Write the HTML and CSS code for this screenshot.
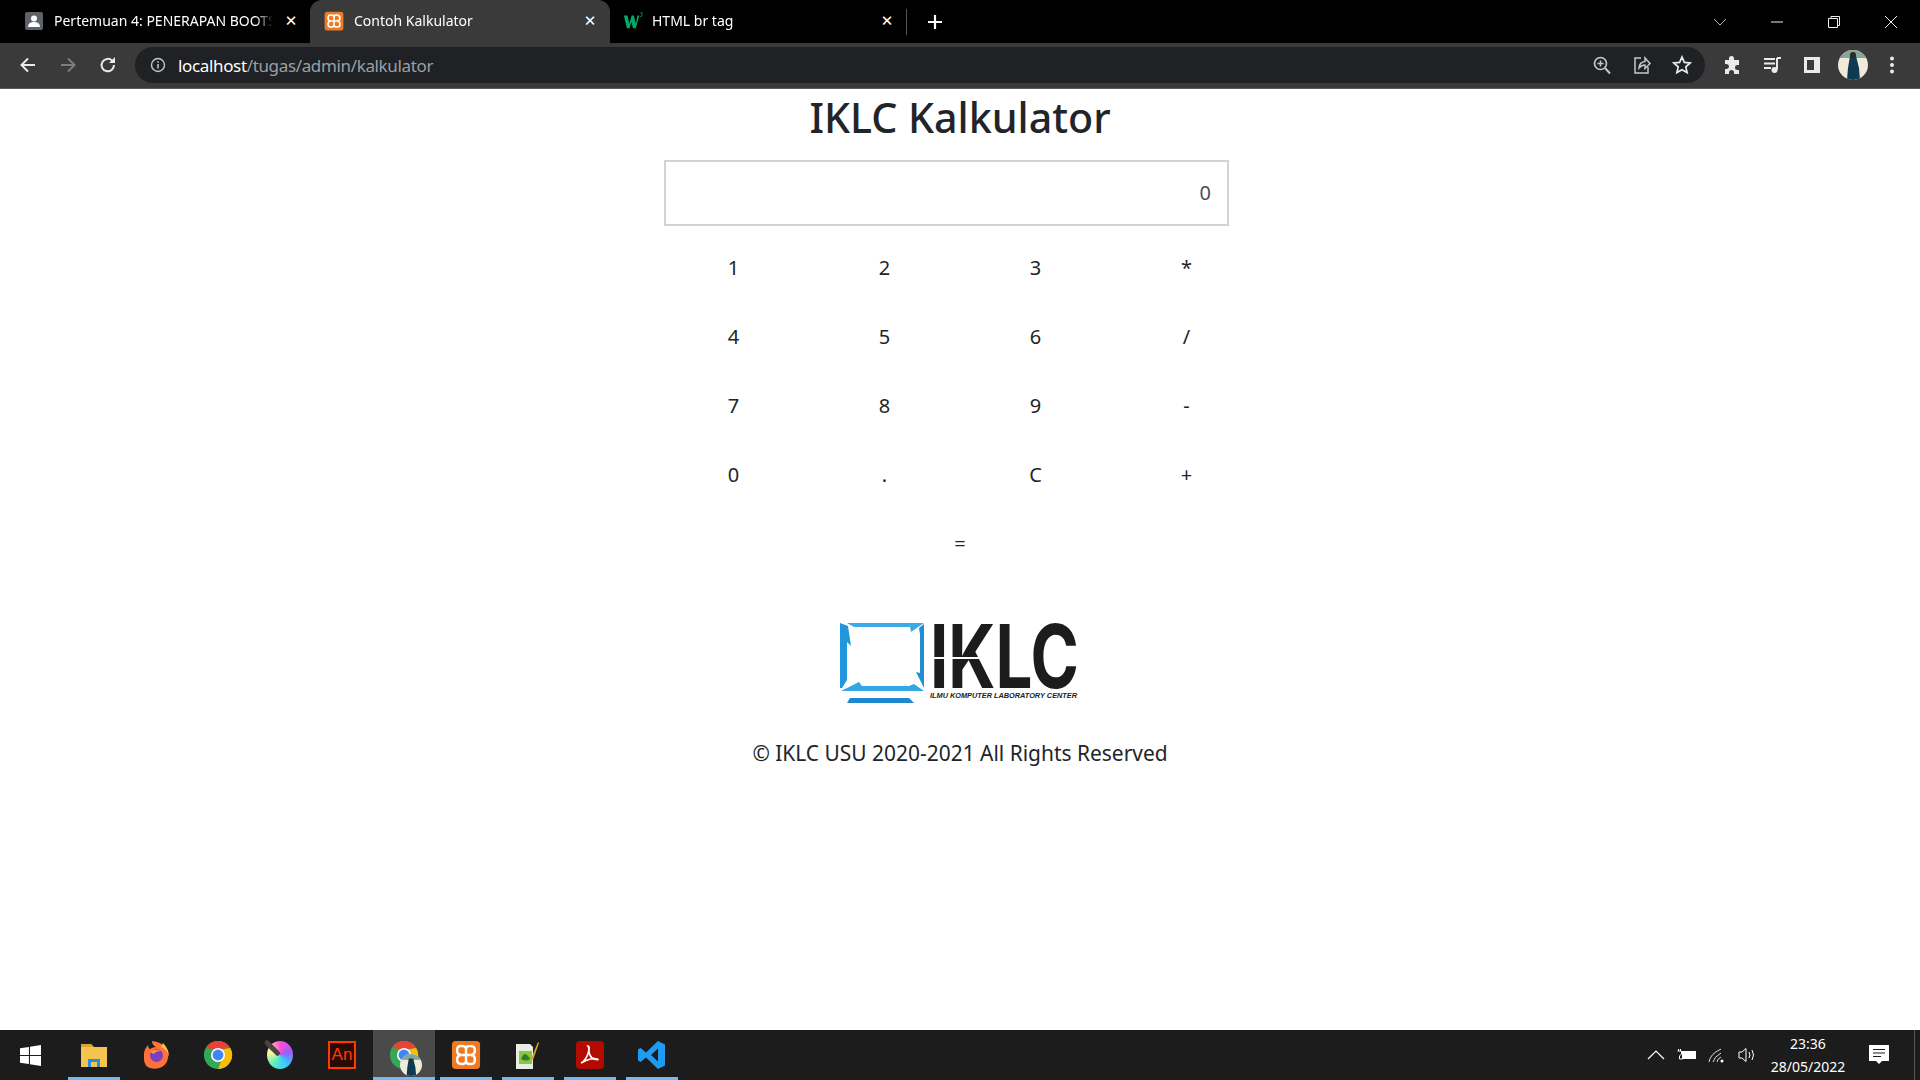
FILE: index.html
```html
<!DOCTYPE html>
<html lang="id">
<head>
<meta charset="utf-8">
<title>Contoh Kalkulator</title>
<link rel="stylesheet" href="styles.css">
</head>
<body>
<svg class="defs" width="0" height="0" aria-hidden="true">
  <defs>
    <symbol id="xampp" viewBox="0 0 32 32">
      <rect x="1" y="1" width="30" height="30" rx="4" fill="#ef7a22"/>
      <path d="M11 6.500h1.500q3.500 0 3.500 3 0-3 3.500-3H21q4.500 0 4.500 4.500t-4.500 5q4.500 0 4.500 5t-4.500 4.500h-1.500q-3.500 0-3.500-3 0 3-3.500 3H11q-4.500 0-4.500-4.500t4.500-5q-4.500 0-4.500-5T11 6.500z" fill="none" stroke="#fff" stroke-width="2.600"/>
      <path d="M16 9.500v13M11 16h10" stroke="#fff" stroke-width="2.600"/>
    </symbol>
    <symbol id="chrome" viewBox="0 0 32 32">
      <circle cx="16" cy="16" r="15" fill="#34a853"/>
      <path d="M3 8.500A15 15 0 0 1 29 8.500L16 10z" fill="#ea4335"/>
      <path d="M29 8.500A15 15 0 0 1 16 31L22 16l-2-6z" fill="#fbbc04"/>
      <circle cx="16" cy="16" r="7.500" fill="#fff"/>
      <circle cx="16" cy="16" r="5.800" fill="#4285f4"/>
    </symbol>
  </defs>
</svg>
<div class="window">
  <header class="tabstrip">
    <div class="tab tab-first">
      <svg class="favicon" viewBox="0 0 20 20"><rect x="1" y="1" width="18" height="18" rx="2" fill="#5f6368"/><circle cx="10" cy="7.500" r="3" fill="#fff"/><path d="M4 16q0-5 6-5t6 5z" fill="#fff"/></svg>
      <span class="tab-title">Pertemuan 4: PENERAPAN BOOTS</span>
      <span class="tab-close">✕</span>
    </div>
    <div class="tab tab-active">
      <svg class="favicon" viewBox="0 0 32 32"><use href="#xampp"/></svg>
      <span class="tab-title">Contoh Kalkulator</span>
      <span class="tab-close">✕</span>
    </div>
    <div class="tab tab-third">
      <svg class="favicon" viewBox="0 0 22 20"><path d="M1 4h4l2 9 2.500-9h2.500l2 9 2-9h2l-4 14h-3l-1.800-7-2 7h-3z" fill="#04aa6d"/><path d="M19 1h2.500l-1.200 1.500q1.200.5.600 2-1 1-2.200.2" fill="none" stroke="#04aa6d" stroke-width=".8"/></svg>
      <span class="tab-title">HTML br tag</span>
      <span class="tab-close">✕</span>
    </div>
    <div class="tab-sep"></div>
    <svg class="new-tab" viewBox="0 0 16 16"><path d="M8 1v14M1 8h14" stroke="#fff" stroke-width="2.200"/></svg>
    <div class="win-controls">
      <svg class="wc wc-chevron" viewBox="0 0 14 14"><path d="M1 4l6 6 6-6" fill="none" stroke="#bbb" stroke-width="1"/></svg>
      <svg class="wc" viewBox="0 0 14 14"><path d="M1 7h12" stroke="#eee" stroke-width="1"/></svg>
      <svg class="wc" viewBox="0 0 14 14"><path d="M1.500 3.500h9v9h-9zM4 3.500v-2h8.500v9h-2" fill="none" stroke="#eee" stroke-width="1"/></svg>
      <svg class="wc" viewBox="0 0 14 14"><path d="M1 1l12 12M13 1L1 13" stroke="#eee" stroke-width="1"/></svg>
    </div>
  </header>

  <nav class="toolbar">
    <div class="nav-buttons">
      <svg class="tool" viewBox="0 0 20 20"><path d="M17 10H4M10 3.500L3.500 10l6.500 6.500" fill="none" stroke="#e8eaed" stroke-width="2"/></svg>
      <svg class="tool" viewBox="0 0 20 20"><path d="M3 10h13M10 3.500l6.500 6.500-6.500 6.500" fill="none" stroke="#7b7d80" stroke-width="2"/></svg>
      <svg class="tool" viewBox="0 0 20 20"><path d="M16 10a6.200 6.200 0 1 1-1.900-4.400" fill="none" stroke="#e8eaed" stroke-width="2"/><path d="M17 2v6h-6z" fill="#e8eaed"/></svg>
    </div>
    <div class="omnibox">
      <svg class="info" viewBox="0 0 16 16"><circle cx="8" cy="8" r="6.500" fill="none" stroke="#c4c7c9" stroke-width="1.400"/><path d="M8 7v4.500M8 4.300v1.500" stroke="#c4c7c9" stroke-width="1.500"/></svg>
      <span class="url"><span class="url-host">localhost</span>/tugas/admin/kalkulator</span>
      <div class="omni-actions">
        <svg class="tool" viewBox="0 0 20 20"><circle cx="8.500" cy="8.500" r="6" fill="none" stroke="#c4c7c9" stroke-width="1.700"/><path d="M13 13l5 5.500" stroke="#c4c7c9" stroke-width="2"/><path d="M8.500 5.500v6M5.500 8.500h6" stroke="#c4c7c9" stroke-width="1.500"/></svg>
        <svg class="tool" viewBox="0 0 20 20"><path d="M9 3H3v15h13v-6" fill="none" stroke="#c4c7c9" stroke-width="1.500"/><path d="M7 13q.5-6 6-6.500V3l5 5.500-5 5V10q-3.500 0-6 3z" fill="none" stroke="#c4c7c9" stroke-width="1.500"/></svg>
        <svg class="tool" viewBox="0 0 20 20"><path d="M10 2l2.400 5.400 5.800.6-4.400 3.900 1.300 5.700L10 14.700l-5.100 2.900 1.300-5.700L1.800 8l5.800-.6z" fill="none" stroke="#e8eaed" stroke-width="1.700"/></svg>
      </div>
    </div>
    <div class="ext-buttons">
      <svg class="tool" viewBox="0 0 20 20"><path d="M7 3.500a2.500 2.500 0 0 1 5 0V5h5v5h-1.500a2.500 2.500 0 0 0 0 5H17v4h-5v-1.500a2.500 2.500 0 0 0-5 0V19H3v-5h1.500a2.500 2.500 0 0 0 0-5H3V5h4z" fill="#e8eaed"/></svg>
      <svg class="tool" viewBox="0 0 20 20"><path d="M2 4h11M2 8.500h11M2 13h7" stroke="#e8eaed" stroke-width="2"/><path d="M15 3h4M15 3v11.500" stroke="#e8eaed" stroke-width="2" fill="none"/><circle cx="12.500" cy="15" r="3" fill="#e8eaed"/></svg>
      <svg class="tool" viewBox="0 0 20 20"><path d="M2 2h16v16H2z" fill="#e8eaed"/><path d="M5 5h7v10H5z" fill="#3a3a3a"/></svg>
      <svg class="avatar" viewBox="0 0 30 30"><clipPath id="avatar-clip"><circle cx="15" cy="15" r="15"/></clipPath><g clip-path="url(#avatar-clip)"><rect width="30" height="30" fill="#f1e9da"/><rect width="30" height="8" fill="#87a69b"/><path d="M12 6h6l3 12 1 12H9l1-12z" fill="#0d3b52"/><circle cx="15" cy="5" r="3" fill="#2d2a26"/></g></svg>
      <svg class="tool tool-menu" viewBox="0 0 20 20"><circle cx="10" cy="3.500" r="2" fill="#e8eaed"/><circle cx="10" cy="10" r="2" fill="#e8eaed"/><circle cx="10" cy="16.500" r="2" fill="#e8eaed"/></svg>
    </div>
  </nav>

  <main class="page">
    <h1 class="title">IKLC Kalkulator</h1>
    <div class="calc">
      <input class="display" type="text" value="0" readonly>
      <div class="keys">
        <button class="key">1</button><button class="key">2</button><button class="key">3</button><button class="key">*</button>
        <button class="key">4</button><button class="key">5</button><button class="key">6</button><button class="key">/</button>
        <button class="key">7</button><button class="key">8</button><button class="key">9</button><button class="key">-</button>
        <button class="key">0</button><button class="key">.</button><button class="key">C</button><button class="key">+</button>
        <button class="key key-wide">=</button>
      </div>
    </div>
    <svg class="logo" viewBox="0 0 242 85" role="img" aria-label="IKLC logo">
      <path d="M8 3H85L72 12 71 7H15z" fill="#3aabe8"/>
      <path d="M80 8l5-4V68L77 52l4 1V14z" fill="#1f8ed3"/>
      <path d="M2 71L20 62 23 66H70l5-2 10 7z" fill="#34a6e4"/>
      <path d="M1 3L9 6 12 26 8 22V60L3 68H1z" fill="#2196da"/>
      <path d="M11 78H70L75 83H8z" fill="#1f88cf"/>
      <text class="logo-mark" x="91" y="68" textLength="149" lengthAdjust="spacingAndGlyphs">IKLC</text>
      <path d="M91 37h60v2H91z" fill="#fff"/>
      <text class="logo-tag" x="91" y="78" textLength="147" lengthAdjust="spacingAndGlyphs">ILMU KOMPUTER LABORATORY CENTER</text>
    </svg>
    <p class="copyright">© IKLC USU 2020-2021 All Rights Reserved</p>
  </main>

  <footer class="taskbar">
    <div class="start">
      <svg class="win-logo" viewBox="0 0 20 20"><path d="M0 3l8.500-1.200v7.700H0zM9.500 1.600L20 0v9.500H9.500zM0 10.500h8.500v7.700L0 17zM9.500 10.500H20V20L9.500 18.400z" fill="#fff"/></svg>
    </div>
    <div class="task open">
      <svg class="task-icon" viewBox="0 0 30 30"><path d="M2 4h10l3 3h13v20H2z" fill="#f4c44f"/><path d="M2 4h10l2 3H2z" fill="#dca32e"/><path d="M9 27v-8h12v8h-3v-5h-6v5z" fill="#2a8fd9"/></svg>
    </div>
    <div class="task">
      <svg class="task-icon" viewBox="0 0 30 30"><path d="M3 13q1-5 4-8 0 3 2 4 3-2 6-2-4-2-4-6 9 1 13 6 4 5 3 11-1 6-6 9-6 3-12 1T3 19z" fill="#ff7139"/><path d="M22 3q6 6 6 14-2-8-8-10z" fill="#ffbd4f"/><circle cx="15.500" cy="15.500" r="6.500" fill="#7a3fc4"/><path d="M9 12q5-4 11-1-6 0-7 3z" fill="#ff9640"/></svg>
    </div>
    <div class="task">
      <svg class="task-icon" viewBox="0 0 32 32"><use href="#chrome"/></svg>
    </div>
    <div class="task">
      <div class="krita"><span class="krita-brush"></span></div>
    </div>
    <div class="task">
      <div class="an-icon">An</div>
    </div>
    <div class="task open active">
      <span class="chrome-stack">
        <svg class="task-icon" viewBox="0 0 32 32"><use href="#chrome"/></svg>
        <svg class="chrome-badge" viewBox="0 0 30 30"><clipPath id="badge-clip"><circle cx="15" cy="15" r="15"/></clipPath><g clip-path="url(#badge-clip)"><rect width="30" height="30" fill="#f1e9da"/><rect width="30" height="8" fill="#87a69b"/><path d="M12 6h6l3 12 1 12H9l1-12z" fill="#0d3b52"/></g></svg>
      </span>
    </div>
    <div class="task open">
      <svg class="task-icon" viewBox="0 0 32 32"><use href="#xampp"/></svg>
    </div>
    <div class="task open">
      <svg class="task-icon task-npp" viewBox="0 0 30 30"><path d="M6 4h14l3 3v22H6z" fill="#e9eee5"/><rect x="9" y="11" width="13" height="13" fill="#8cc63f"/><path d="M11 19q3-7 6-4t3 4q-4 3-9 0z" fill="#2e7d32"/><path d="M21 19L28 2l1 1-6 17z" fill="#e0a526"/></svg>
    </div>
    <div class="task open">
      <svg class="task-icon" viewBox="0 0 30 30"><rect x="1" y="1" width="28" height="28" rx="4" fill="#b30b00"/><path d="M6 23q4-2 6.500-8T13 6q1.500 0 1 4t3 8q3 2 6.500 1.500-4-1.500-8-.5t-9.500 4z" fill="none" stroke="#fff" stroke-width="1.700"/></svg>
    </div>
    <div class="task open">
      <svg class="task-icon" viewBox="0 0 30 30"><path d="M21 1l7 3.500v21L21 29 9 17.500 3.500 22 1 20.500V9.500L3.500 8 9 12.500zM21 8.500L14 15l7 6.500z" fill="#1f9cf0" fill-rule="evenodd"/></svg>
    </div>
    <div class="tray">
      <svg class="tray-icon" viewBox="0 0 18 18"><path d="M1 13l8-8 8 8" fill="none" stroke="#fff" stroke-width="1.200"/></svg>
      <svg class="tray-icon tray-battery" viewBox="0 0 20 14"><path d="M5 3h14v8H5z" fill="#fff"/><path d="M1.500 1v2M3.500 1v2M.5 3h4v3l-2 2v3h3" fill="none" stroke="#fff" stroke-width="1"/></svg>
      <svg class="tray-icon" viewBox="0 0 18 18"><path d="M1 16q1-8 12-13M5 16q1-5 8-9M9 16q0-3 4-5" fill="none" stroke="#ddd" stroke-width="1"/><circle cx="14" cy="15" r="1.500" fill="#fff"/></svg>
      <svg class="tray-icon" viewBox="0 0 18 18"><path d="M1 6h3l4-3.500v13L4 12H1z" fill="none" stroke="#fff" stroke-width="1"/><path d="M11 6q2 3 0 6M14 4q3 5 0 10" fill="none" stroke="#fff" stroke-width="1"/></svg>
      <div class="clock"><span>23:36</span><span>28/05/2022</span></div>
      <svg class="notify" viewBox="0 0 20 20"><path d="M0 0h20v16h-7l-3 3-3-3H0z" fill="#fff"/><path d="M4 4.500h12M4 8h12M4 11.500h8" stroke="#1c1c1c" stroke-width="1"/></svg>
      <div class="show-desktop"></div>
    </div>
  </footer>
</div>
</body>
</html>
```
FILE: styles.css
```css
* { box-sizing: border-box; }
html, body { margin: 0; padding: 0; height: 100%; }
body { font-family: "Noto Sans", "Open Sans", sans-serif; color: #212529; background: #fff; overflow: hidden; }
.defs { display: block; height: 0; }
.window { display: flex; flex-direction: column; height: 1080px; }

/* tab strip */
.tabstrip { display: flex; align-items: center; height: 43px; background: #000; color: #fff; padding-left: 16px; flex: none; }
.tab { display: flex; align-items: center; height: 43px; font-size: 14px; padding: 0 12px 2px 12px; gap: 9px; position: relative; }
.tab-first { width: 294px; padding-left: 8px; padding-right: 11px; gap: 10px; }
.tab-active { width: 300px; background: #3a3a3a; border-radius: 12px 12px 0 0; padding-left: 14px; gap: 10px; }
.tab-third { width: 296px; padding-left: 13px; padding-right: 11px; }
.favicon { width: 20px; height: 20px; flex: none; }
.tab-title { flex: 1; white-space: nowrap; overflow: hidden; line-height: 20px; -webkit-mask-image: linear-gradient(90deg, #000 92%, transparent); mask-image: linear-gradient(90deg, #000 92%, transparent); }
.tab-close { width: 16px; text-align: center; font-size: 15px; font-family: "DejaVu Sans", sans-serif; flex: none; }
.tab-sep { width: 1px; height: 26px; background: #555; flex: none; }
.new-tab { width: 16px; height: 16px; margin-left: 20px; flex: none; }
.win-controls { margin-left: auto; display: flex; align-items: center; gap: 43px; padding-right: 22px; }
.wc { width: 14px; height: 14px; flex: none; display: block; }

/* toolbar */
.toolbar { display: flex; align-items: center; height: 46px; background: #3a3a3a; border-bottom: 1px solid #5a5a5a; padding: 0 17px 1px 18px; flex: none; }
.nav-buttons { display: flex; gap: 20px; width: 117px; flex: none; }
.tool { width: 20px; height: 20px; display: block; flex: none; }
.tool-menu { margin-left: -2px; }
.omnibox { display: flex; align-items: center; height: 36px; width: 1570px; background: #202124; border-radius: 18px; padding: 0 13px 0 15px; flex: none; }
.info { width: 16px; height: 16px; flex: none; }
.url { margin-left: 12px; font-size: 17px; color: #9aa0a6; letter-spacing: -0.35px; white-space: nowrap; }
.url-host { color: #fff; }
.omni-actions { margin-left: auto; display: flex; gap: 20px; }
.ext-buttons { display: flex; align-items: center; gap: 20px; margin-left: 17px; }
.avatar { width: 30px; height: 30px; flex: none; margin: 0 -4px 0 -4px; }

/* page */
.page { flex: 1; display: flex; flex-direction: column; align-items: center; background: #fff; min-height: 0; }
.title { margin: 0 0 14px; height: 57px; line-height: 56px; font-size: 41.200px; font-weight: 500; }
.calc { width: 604px; display: flex; flex-direction: column; }
.display { width: 565px; height: 66px; margin: 0 0 7px 6px; border: 2.500px solid #d3d3d3; background: #fff; font: 20px "Noto Sans", sans-serif; color: #495057; text-align: right; padding: 0 16px 2px; outline: none; display: block; }
.keys { display: grid; grid-template-columns: repeat(4, 151px); grid-auto-rows: 69px; }
.key { border: 0; background: transparent; font: 20px "Noto Sans", sans-serif; color: #212529; padding: 0; }
.key-wide { grid-column: 1 / -1; }
.logo { width: 242px; height: 85px; margin-top: 42px; flex: none; display: block; overflow: visible; }
.logo-mark { font: 700 88px Inter, "Liberation Sans", sans-serif; fill: #1c1c1e; }
.logo-tag { font: italic 900 6.500px "Liberation Sans", sans-serif; fill: #222; }
.copyright { margin: 32px 0 0; font-size: 20.950px; line-height: 32px; }

/* taskbar */
.taskbar { display: flex; align-items: stretch; height: 50px; background: #1c1c1c; flex: none; }
.start { width: 61px; display: flex; align-items: center; justify-content: center; flex: none; margin-right: 2px; }
.win-logo { width: 21px; height: 21px; }
.task { width: 62px; display: flex; align-items: center; justify-content: center; position: relative; flex: none; }
.task.open::after { content: ""; position: absolute; left: 5px; right: 5px; bottom: 0; height: 3px; background: #76b9ed; }
.task.active { background: #4a4a4a; }
.task.active::after { left: 0; right: 0; }
.task-icon { width: 30px; height: 30px; display: block; }
.task-npp { margin-left: -6px; }
.krita { width: 26px; height: 28px; border-radius: 50%; background: conic-gradient(#ff4fd0, #9a5cff, #38c8ff, #5df0c0, #fff59a, #ff4fd0); position: relative; }
.krita-brush { position: absolute; left: -2px; top: -1px; width: 20px; height: 5px; background: #444; border-radius: 3px; transform: rotate(45deg); transform-origin: 2px 2px; }
.an-icon { width: 28px; height: 28px; background: #2a0a03; border: 2px solid #ff3a00; color: #ff3a00; font: 17px/24px "Liberation Sans", sans-serif; text-align: center; }
.chrome-stack { position: relative; display: block; width: 30px; height: 30px; }
.chrome-badge { position: absolute; right: -3px; bottom: -6px; width: 22px; height: 22px; }
.tray { margin-left: auto; display: flex; align-items: center; color: #fff; }
.tray-icon { width: 18px; height: 18px; margin-right: 12px; flex: none; }
.tray-battery { width: 20px; height: 14px; margin-right: 11px; }
.clock { display: flex; flex-direction: column; align-items: center; font-size: 14px; line-height: 23px; width: 80px; }
.notify { width: 20px; height: 20px; margin-left: 21px; margin-right: 25px; flex: none; }
.show-desktop { width: 1px; height: 50px; background: #555; margin-right: 5px; }
```
